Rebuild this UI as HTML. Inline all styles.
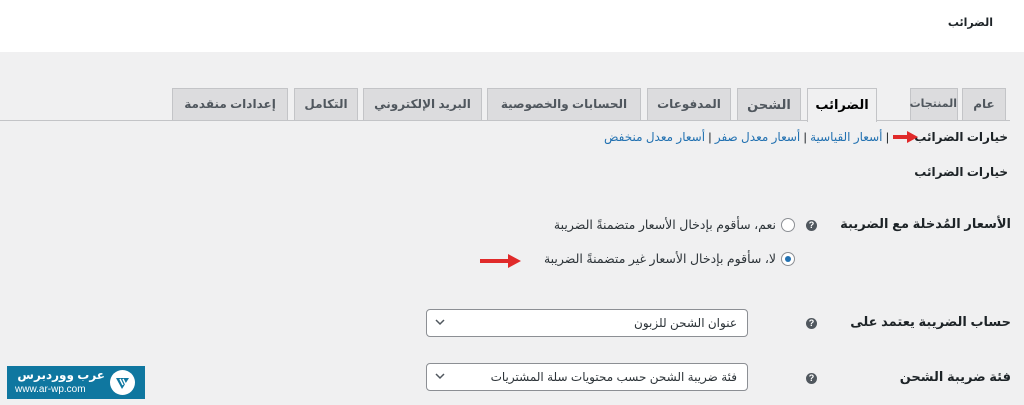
<!DOCTYPE html>
<html><head><meta charset="utf-8"><style>
body{margin:0;width:1024px;height:405px;background:#f0f0f1;font-family:"Liberation Sans","DejaVu Sans","Noto Sans CJK SC",sans-serif;position:relative;overflow:hidden;color:#1d2327}
.a{position:absolute;white-space:nowrap;direction:rtl}
.top{position:absolute;left:0;top:0;width:1024px;height:52px;background:#fff}
.line{position:absolute;left:0;top:120px;width:1010px;height:1px;background:#c3c4c7}
.tab{position:absolute;top:88px;height:32px;background:#dcdcde;border:1px solid #c3c4c7;border-bottom:none;box-sizing:border-box;font-size:12px;font-weight:bold;color:#50575e;text-align:center;line-height:31px;direction:rtl;white-space:nowrap}
.tab.act{background:#f0f0f1;color:#000;height:34px}
.lnk{color:#2271b1}
.sel{position:absolute;left:426px;width:322px;height:28px;background:#fff;border:1px solid #8c8f94;border-radius:4px;box-sizing:border-box;font-size:12px;direction:rtl;padding-right:10px;line-height:26px;color:#2c3338}
.sel svg{position:absolute;left:8px;top:9px}
.q{position:absolute;width:11px;height:11px;border-radius:50%;background:#50575e;color:#fff;font-size:9px;font-weight:bold;text-align:center;line-height:11px}
.r{position:absolute;width:14px;height:14px;border:1px solid #8c8f94;border-radius:50%;background:#fff;box-sizing:border-box}
</style></head><body>
<div class="top"></div>
<div class="a" style="right:31px;top:16px;font-size:11px;font-weight:bold">الضرائب</div>
<div class="line"></div>
<div class="tab" style="left:962px;width:44px">عام</div>
<div class="tab" style="left:910px;width:48px;font-size:11px;letter-spacing:-0.5px">المنتجات</div>
<div class="tab act" style="left:807px;width:70px;font-size:13px">الضرائب</div>
<div class="tab" style="left:737px;width:64px;font-size:13px">الشحن</div>
<div class="tab" style="left:647px;width:84px">المدفوعات</div>
<div class="tab" style="left:487px;width:154px">الحسابات والخصوصية</div>
<div class="tab" style="left:363px;width:119px">البريد الإلكتروني</div>
<div class="tab" style="left:294px;width:64px">التكامل</div>
<div class="tab" style="left:172px;width:116px">إعدادات منقدمة</div>
<div class="a" style="right:16px;top:130px;font-size:12px"><b>خيارات الضرائب</b> <span style="margin-right:22px">|</span> <span class="lnk">أسعار القياسية</span> | <span class="lnk">أسعار معدل صفر</span> | <span class="lnk">أسعار معدل منخفض</span></div>
<svg style="position:absolute;left:893px;top:130px" width="26" height="14"><path d="M0 5h14V1l11 6-11 6V9H0z" fill="#e02a2a"/></svg>
<div class="a" style="right:16px;top:165px;font-size:12px;font-weight:bold">خيارات الضرائب</div>
<div class="a" style="right:13px;top:216px;font-size:13px;font-weight:bold">الأسعار المُدخلة مع الضريبة</div>
<div class="q" style="left:806px;top:220px">?</div>
<div class="r" style="left:781px;top:218px"></div>
<div class="a" style="right:248px;top:217px;font-size:12.5px;color:#2c3338">نعم، سأقوم بإدخال الأسعار متضمنةً الضريبة</div>
<div class="r" style="left:781px;top:252px"><div style="width:6px;height:6px;border-radius:50%;background:#2271b1;margin:3px"></div></div>
<div class="a" style="right:248px;top:251px;font-size:12.5px;color:#2c3338">لا، سأقوم بإدخال الأسعار غير متضمنةً الضريبة</div>
<svg style="position:absolute;left:480px;top:253px" width="42" height="16"><path d="M0 6h28V1l13 7-13 7V10H0z" fill="#e02a2a"/></svg>
<div class="a" style="right:13px;top:314px;font-size:13px;font-weight:bold">حساب الضريبة يعتمد على</div>
<div class="q" style="left:806px;top:318px">?</div>
<div class="sel" style="top:309px">عنوان الشحن للزبون<svg width="10" height="7"><path d="M1 1l4 4 4-4" stroke="#50575e" stroke-width="1.5" fill="none"/></svg></div>
<div class="a" style="right:13px;top:369px;font-size:13px;font-weight:bold">فئة ضريبة الشحن</div>
<div class="q" style="left:806px;top:373px">?</div>
<div class="sel" style="top:363px">فئة ضريبة الشحن حسب محتويات سلة المشتريات<svg width="10" height="7"><path d="M1 1l4 4 4-4" stroke="#50575e" stroke-width="1.5" fill="none"/></svg></div>
<div style="position:absolute;left:7px;top:366px;width:138px;height:33px;background:#0f77a0">
<div style="position:absolute;left:103px;top:4px;width:25px;height:25px;border-radius:50%;background:#fff"></div>
<svg style="position:absolute;left:103px;top:4px" width="25" height="25"><path d="M6 8l6 11 7-11z" fill="#0f77a0"/><path d="M10 9l3 6M13 9l3 6" stroke="#fff" stroke-width="1.5"/></svg>
<div class="a" style="right:40px;top:2px;font-size:12px;font-weight:bold;color:#fff">عرب ووردبرس</div>
<div style="position:absolute;left:8px;top:18px;font-size:10px;color:#fff">www.ar-wp.com</div>
</div>
</body></html>
